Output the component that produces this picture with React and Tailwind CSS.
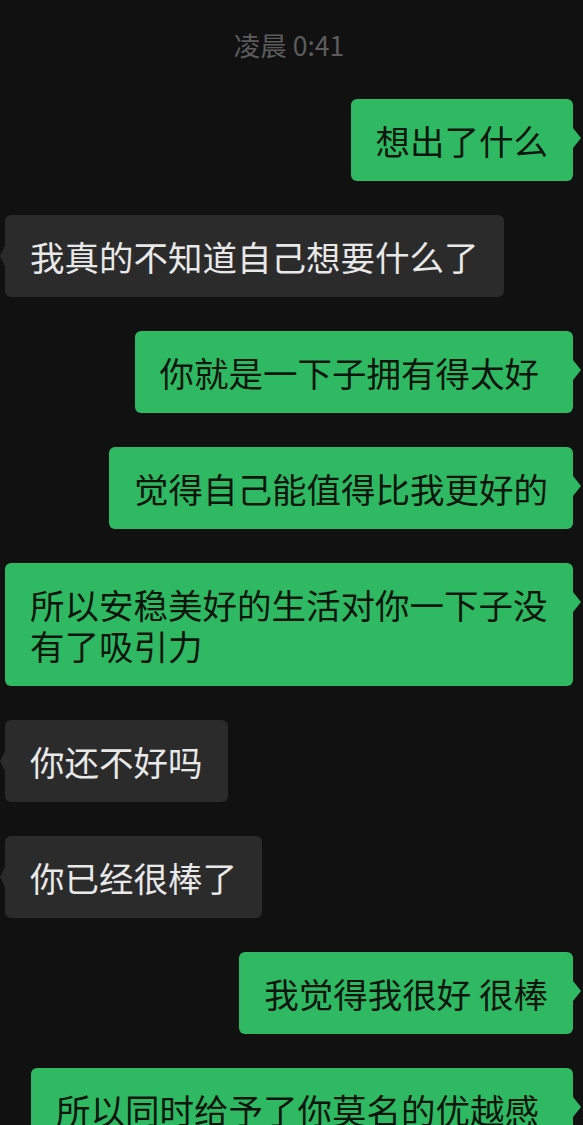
import React from "react";

const messages = [
  { me: true, text: "想出了什么" },
  { me: false, text: "我真的不知道自己想要什么了" },
  { me: true, text: "你就是一下子拥有得太好", wide: true },
  { me: true, text: "觉得自己能值得比我更好的" },
  { me: true, text: "所以安稳美好的生活对你一下子没有了吸引力" },
  { me: false, text: "你还不好吗" },
  { me: false, text: "你已经很棒了" },
  { me: true, text: "我觉得我很好 很棒" },
  { me: true, text: "所以同时给予了你莫名的优越感", wide: true },
];

function Bubble({ me, text, wide }) {
  return (
    <div className={me ? "flex justify-end" : "flex justify-start"}>
      <div
        className={
          (me
            ? "relative max-w-[568px] rounded-[6px] bg-[#2fb962] py-[20.5px] pl-[25px] text-[#0c160e] "
            : "relative max-w-[568px] rounded-[6px] bg-[#2b2b2b] py-[20.5px] pl-[25px] text-[#e8e8e8] ") +
          (wide ? "pr-[34px]" : "pr-[25px]")
        }
      >
        {me ? (
          <span className="absolute left-full top-[29px] h-0 w-0 border-y-[10px] border-l-[8px] border-y-transparent border-l-[#2fb962]" />
        ) : (
          <span className="absolute right-full top-[31px] h-0 w-0 border-y-[10px] border-r-[5px] border-y-transparent border-r-[#2b2b2b]" />
        )}
        <p className="text-[34.5px] leading-[41px] break-all">{text}</p>
      </div>
    </div>
  );
}

export default function App() {
  return (
    <div
      className="h-screen w-full overflow-hidden bg-[#111111] pl-[5px] pr-[10px] pt-[30px]"
      style={{ fontFamily: '"Noto Sans CJK SC", "Noto Sans", sans-serif' }}
    >
      <div className="text-center text-[26.5px] leading-[30px] text-[#5c5c5c]">凌晨 0:41</div>
      <div className="mt-[39px] flex flex-col gap-[34px]">
        {messages.map((m, i) => (
          <Bubble key={i} me={m.me} text={m.text} wide={m.wide} />
        ))}
      </div>
    </div>
  );
}
